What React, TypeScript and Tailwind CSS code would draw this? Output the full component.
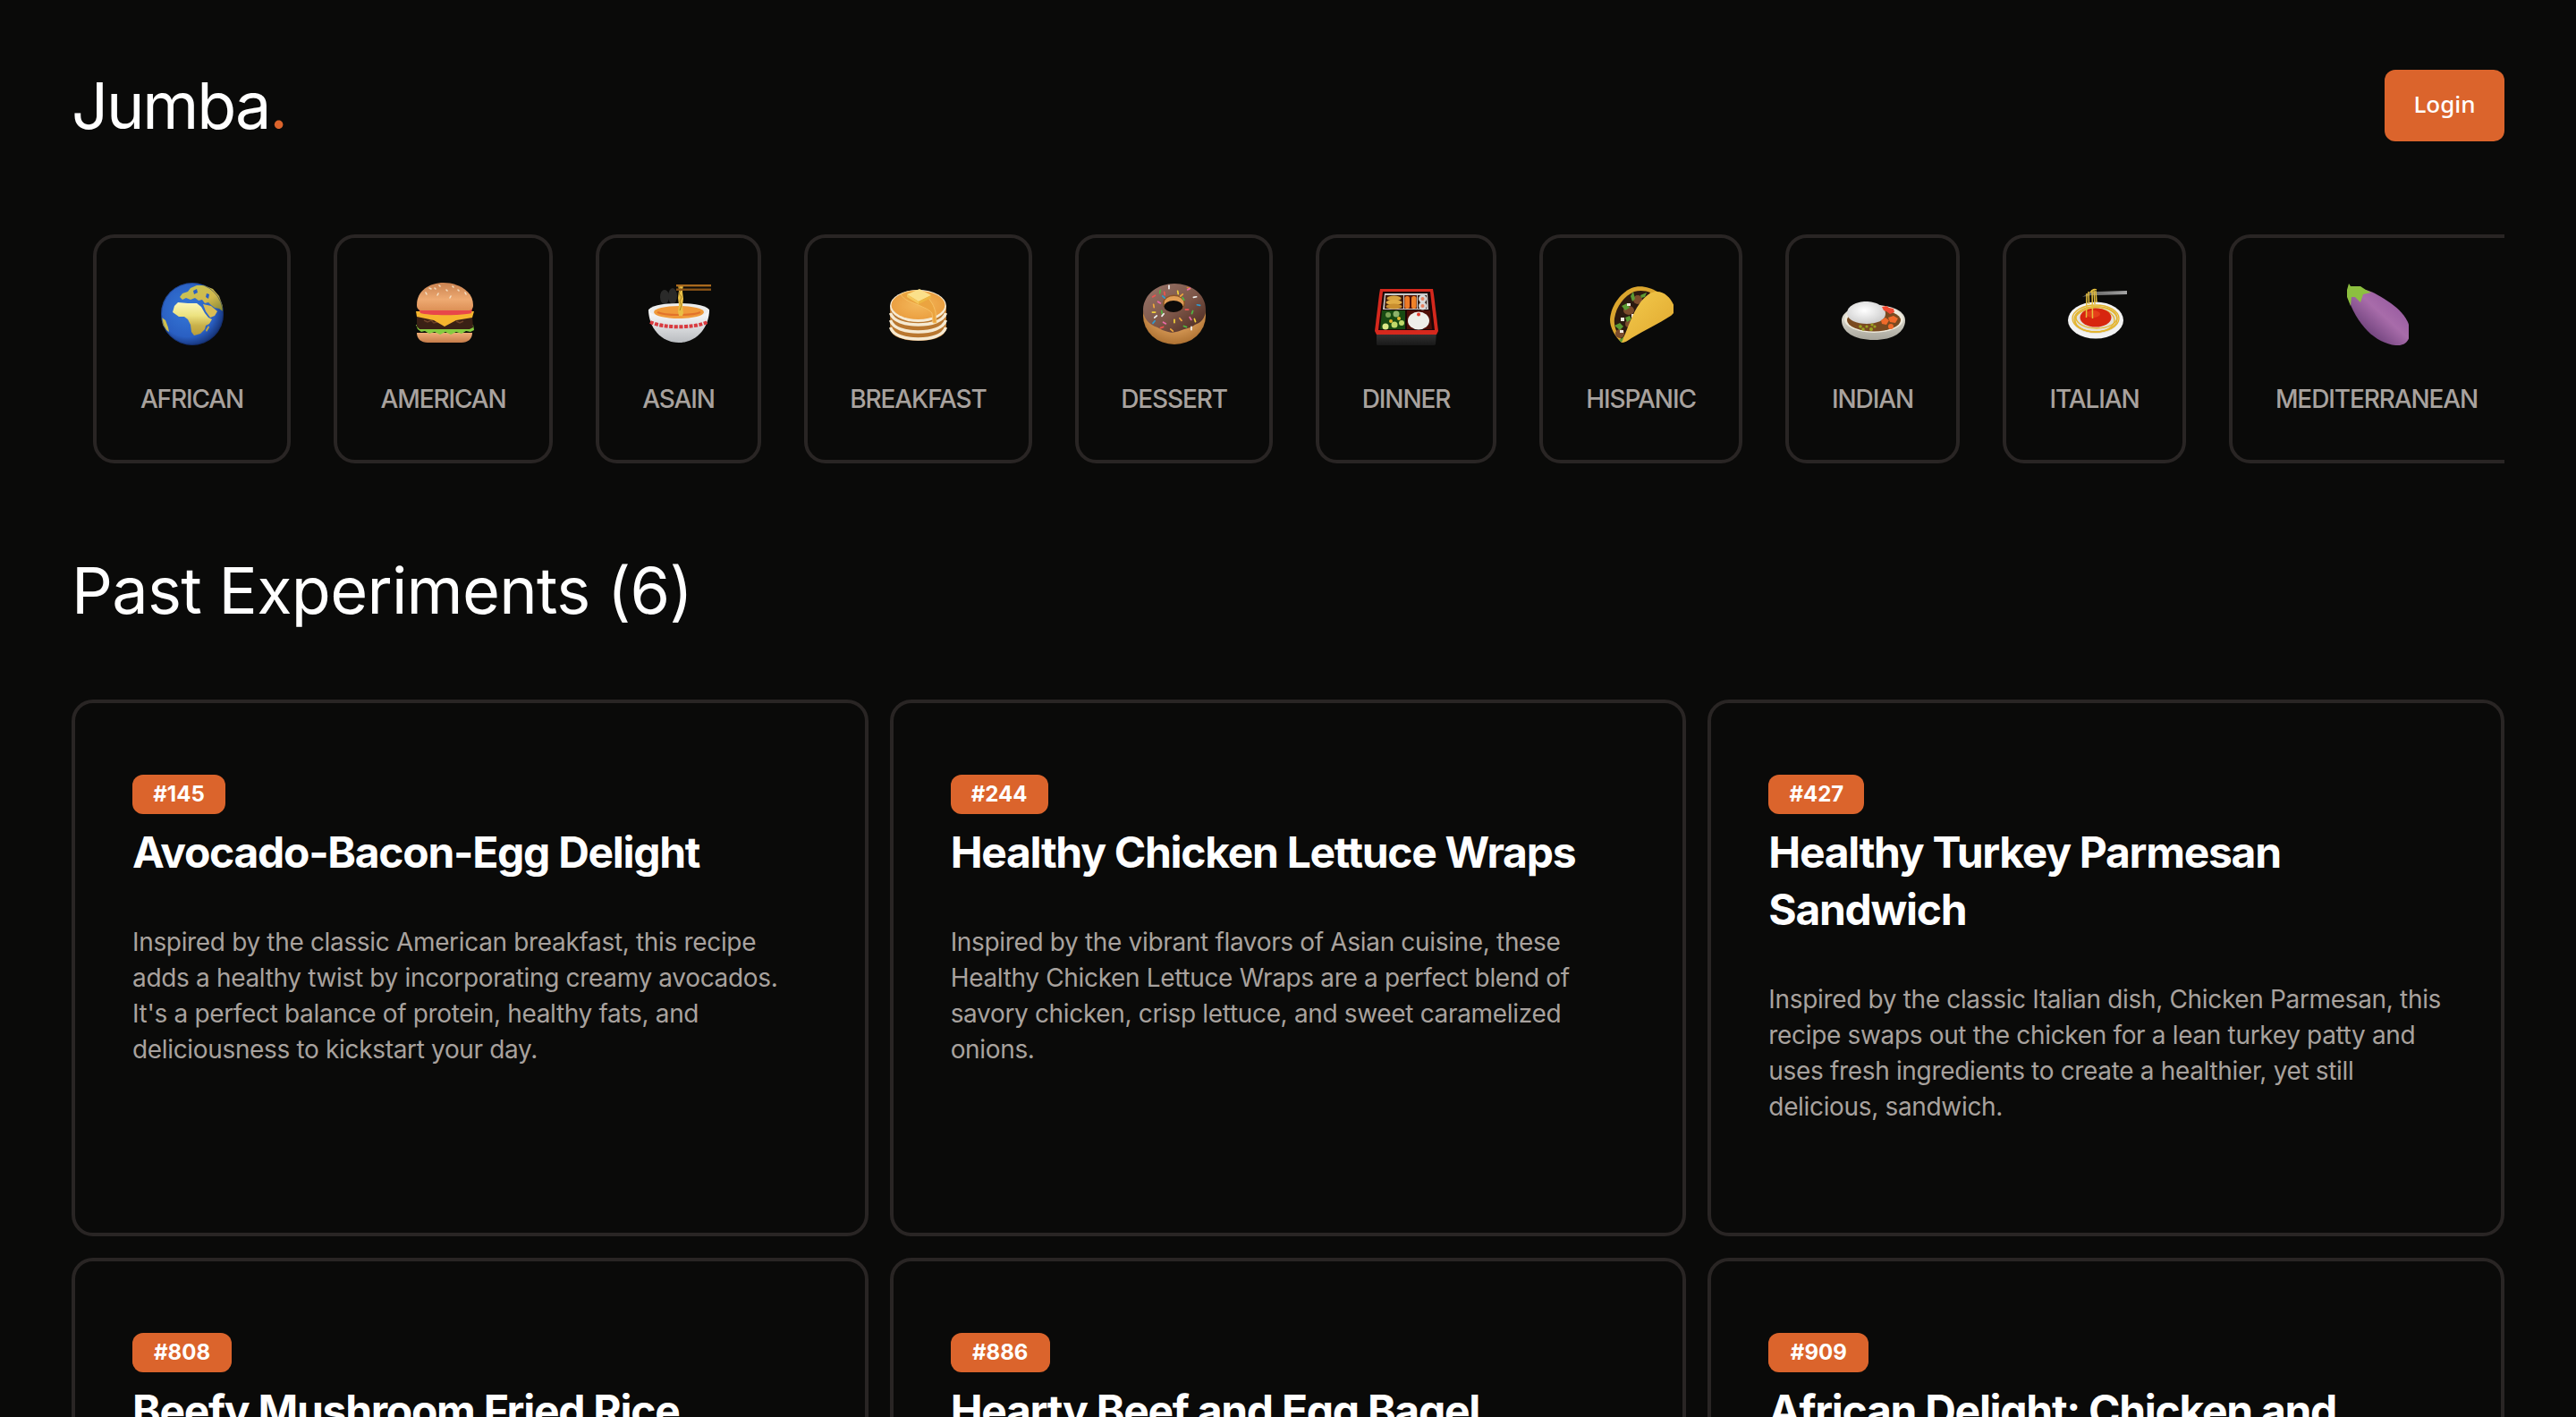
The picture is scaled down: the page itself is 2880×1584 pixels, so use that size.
/* Jumba landing page: header, cuisine strip and past experiments */
import type { ReactNode } from "react";

function EmojiBox({ children }: { children: ReactNode }) {
  return (
    <svg viewBox="0 0 72 72" className="h-[72px] w-[72px] shrink-0">
      {children}
    </svg>
  );
}

function Globe() {
  return (
    <EmojiBox>
      <defs>
        <radialGradient id="gSea" cx="42%" cy="42%" r="62%">
          <stop offset="0%" stopColor="#3578d8" />
          <stop offset="72%" stopColor="#2a5fc2" />
          <stop offset="100%" stopColor="#142f70" />
        </radialGradient>
        <linearGradient id="gAfrica" x1="0" y1="0" x2="0" y2="1">
          <stop offset="0%" stopColor="#fbf7bb" />
          <stop offset="40%" stopColor="#ece27f" />
          <stop offset="70%" stopColor="#c9b14a" />
          <stop offset="100%" stopColor="#b89c3a" />
        </linearGradient>
        <linearGradient id="gAsia" x1="0" y1="0" x2="1" y2="1">
          <stop offset="0%" stopColor="#c3c657" />
          <stop offset="60%" stopColor="#d3b94c" />
          <stop offset="100%" stopColor="#7f8434" />
        </linearGradient>
      </defs>
      <g transform="translate(1 2)">
        <circle cx="35" cy="35" r="35" fill="url(#gSea)" />
        <path d="M13 33L15 26L19 22L30 23L40 23L45 27L49 34L53 39L57 41L54 46L50 48L49 52L44 57L37 59L34 55L33 47L30 41L26 38L20 38Z" fill="url(#gAfrica)" />
        <path d="M21 16L24 12L30 10L33 6L40 3L48 3L58 7L65 15L69 26L69 32L65 29L60 28L56 25L53 22L49 23L46 19L42 20L38 17L33 19L28 17L24 19Z" fill="url(#gAsia)" />
        <path d="M47 24L56 26L63 32L60 37L55 39L50 32Z" fill="#d9bd55" />
        <path d="M1 39L5 42L8 50L9 55L6 53L2 47Z" fill="#cfc04f" />
        <path d="M50 53L53 48L54 50L51 55Z" fill="#c2aa45" />
        <path d="M36 9l4-2 1 4-4 2zM51 12l3 1-1 5-3-2z" fill="#2a5fc2" />
        <circle cx="35" cy="35" r="34.500" fill="none" stroke="#10265f" strokeOpacity=".5" strokeWidth="1" />
      </g>
    </EmojiBox>
  );
}

function Burger() {
  return (
    <EmojiBox>
      <defs>
        <linearGradient id="bBun" x1="0" y1="0" x2="0" y2="1">
          <stop offset="0%" stopColor="#c98250" />
          <stop offset="60%" stopColor="#eeaa72" />
          <stop offset="100%" stopColor="#dd9056" />
        </linearGradient>
        <linearGradient id="bLow" x1="0" y1="0" x2="0" y2="1">
          <stop offset="0%" stopColor="#f0ae78" />
          <stop offset="100%" stopColor="#c57c4a" />
        </linearGradient>
      </defs>
      <path d="M6 58h62c0 7-5 11-12 11H18C11 69 6 65 6 58z" fill="url(#bLow)" />
      <path d="M5 49h64l1 6-4 2-5-1-5 3-6-2-6 3-6-3-6 3-6-3-6 2-5-3-4 1-4-3z" fill="#86cb3f" />
      <path d="M6 40h62l1 12-4 2H9l-3-3z" fill="#3a2015" />
      <path d="M14 44l4 2 4-2 3 3 4-1M50 45l4 2 4-2" stroke="#6c4128" strokeWidth="1.500" fill="none" />
      <path d="M5 34h65l-2 7-18 3-13 7-12-7-19-4z" fill="#f6b52e" />
      <path d="M8 31h60l-1 5c-10 3-48 3-57 0z" fill="#e8474a" />
      <path d="M6 27C6 11 20 2 36 2s33 9 33 25c0 4-2 6-6 6H12c-4 0-6-2-6-6z" fill="url(#bBun)" />
      <g stroke="#f2dcc0" strokeWidth="1.600" strokeLinecap="round">
        <path d="M31 5l1 1M46 6l1 1M20 8l2 1M39 10l1 1M52 10l1 1M16 13l1 2M30 14l-1 2M60 13l1 2M44 17l-1 2M26 8l1 1" />
      </g>
    </EmojiBox>
  );
}

function Ramen() {
  return (
    <EmojiBox>
      <defs>
        <linearGradient id="rBowl" x1="0" y1="0" x2="0" y2="1">
          <stop offset="0%" stopColor="#ffffff" />
          <stop offset="100%" stopColor="#b9bcc0" />
        </linearGradient>
      </defs>
      <g fill="#ffffff" opacity=".13">
        <ellipse cx="20" cy="18" rx="5" ry="8" />
        <ellipse cx="29" cy="17" rx="5" ry="9" />
      </g>
      <path d="M2 32c0 20 14 37 34 37s34-17 34-37z" fill="url(#rBowl)" />
      <ellipse cx="36" cy="33" rx="34" ry="8" fill="#eceded" />
      <ellipse cx="36" cy="35" rx="28" ry="7" fill="#f09a3a" />
      <path d="M12 35c8 4 40 4 48 0" stroke="#e2722a" strokeWidth="2" fill="none" />
      <path d="M4 46c14 7 50 7 64 0" stroke="#d93a3f" strokeWidth="4" strokeDasharray="4 1.500" fill="none" />
      <path d="M35 4l6 0-1 8 1 8-1 8 1 8-1 3h-4l-1-5 1-7-1-8 1-8z" fill="#e9bf45" />
      <path d="M36 6l2 4-2 4 3 4-2 5 2 4-2 6" stroke="#a47b22" strokeWidth=".9" fill="none" />
      <rect x="33" y="4" width="39" height="2.400" fill="#a9691e" />
      <rect x="33" y="8.500" width="39" height="2.400" fill="#8a5418" />
    </EmojiBox>
  );
}

function Pancakes() {
  return (
    <EmojiBox>
      <defs>
        <radialGradient id="pTop" cx="50%" cy="50%" r="60%">
          <stop offset="0%" stopColor="#f4b75a" />
          <stop offset="100%" stopColor="#e99b3c" />
        </radialGradient>
      </defs>
      <path d="M4 28v24c0 10 14 15 31.500 15S67 62 67 52V28z" fill="#b9772f" />
      <g fill="none" stroke="#f6ead2" strokeWidth="3.400">
        <path d="M4.500 36c3 9 16 13 31 13s28-4 31-13" />
        <path d="M4.500 44c3 9 16 13 31 13s28-4 31-13" />
        <path d="M4.500 52c3 9 16 13 31 13s28-4 31-13" />
      </g>
      <ellipse cx="35.500" cy="28" rx="31.500" ry="18" fill="#f6ead2" />
      <ellipse cx="35.500" cy="27" rx="30" ry="16" fill="url(#pTop)" />
      <path d="M16 15c6-3 14-5 22-4 4 4 10 8 13 14 2 3 3 7 4 10l1 12-4 0-1-11c-3-4-9-6-15-9-8-3-17-6-20-12z" fill="#eba440" stroke="#f8c76b" strokeWidth=".8" />
      <path d="M23 15l14-6 13 7-14 7z" fill="#fbe08a" />
      <path d="M23 15l13 8v3l-13-8z" fill="#f5c75a" />
      <path d="M36 23l14-7v3l-14 7z" fill="#edb642" />
    </EmojiBox>
  );
}

function Donut() {
  const sprinkles: [number, number, number, string][] = [
    [30, 7, 90, "#f1f1f1"], [25, 14, 80, "#ef5350"], [13, 17, -30, "#ef5350"], [13, 28, 80, "#f2a93b"],
    [19, 24, 30, "#ec6aa7"], [13, 35, 0, "#f2d13b"], [22, 35, 80, "#52b743"], [40, 13, 80, "#f2d13b"],
    [52, 8, 20, "#d6892f"], [52, 9, -30, "#ec6aa7"], [20, 12, 100, "#52b743"], [24, 18, 40, "#2f9bd1"],
    [59, 18, -10, "#f1f1f1"], [46, 20, 60, "#52b743"], [44, 16, -40, "#f2a93b"], [63, 27, 10, "#2f9bd1"],
    [50, 32, 0, "#ef5350"], [56, 35, -70, "#52b743"], [59, 44, 70, "#f2d13b"], [54, 42, 60, "#ec6aa7"],
    [15, 40, -40, "#f1f1f1"], [23, 38, -50, "#f1f1f1"], [13, 46, -50, "#2f9bd1"], [25, 47, 30, "#ec6aa7"],
    [36, 45, 90, "#f2d13b"], [43, 43, 50, "#f2a93b"], [48, 51, 20, "#52b743"], [55, 53, 90, "#f1f1f1"],
    [22, 52, -20, "#ef5350"], [33, 55, 40, "#f2a93b"],
  ];
  return (
    <EmojiBox>
      <defs>
        <radialGradient id="dDough" cx="50%" cy="35%" r="70%">
          <stop offset="60%" stopColor="#d09350" />
          <stop offset="100%" stopColor="#a66a2c" />
        </radialGradient>
        <linearGradient id="dIce" x1="0" y1="0" x2="1" y2="1">
          <stop offset="0%" stopColor="#9a766b" />
          <stop offset="55%" stopColor="#7c5547" />
          <stop offset="100%" stopColor="#43231a" />
        </linearGradient>
      </defs>
      <ellipse cx="36" cy="39" rx="35" ry="32" fill="url(#dDough)" />
      <path d="M1 32C2 14 18 3 36 3s35 11 35 29c0 10-6 15-12 17-4 3-8 4-12 5-6 2-12 5-18 3-5-1-8-3-12-5C8 49 1 42 1 32z" fill="url(#dIce)" />
      <ellipse cx="35.500" cy="25" rx="12.500" ry="9.500" fill="#8a5426" />
      <ellipse cx="35.500" cy="25" rx="11" ry="8" fill="#e09d55" />
      <ellipse cx="35" cy="28.500" rx="10.500" ry="6.500" fill="#0c0a09" />
      {sprinkles.map(([x, y, r, c], i) => (
        <rect key={i} x={x - 2.500} y={y - 0.800} width="5" height="1.700" rx=".8" fill={c} transform={`rotate(${r} ${x} ${y})`} />
      ))}
    </EmojiBox>
  );
}

function Bento() {
  return (
    <EmojiBox>
      <defs>
        <linearGradient id="beBase" x1="0" y1="0" x2="0" y2="1">
          <stop offset="0%" stopColor="#3a3a3a" />
          <stop offset="100%" stopColor="#161616" />
        </linearGradient>
      </defs>
      <path d="M3 56h67l-1 15-3 2-12-1H16l-11 1-2-2z" fill="url(#beBase)" />
      <path d="M7 9h59l1 6 5 41-2 4H3l-2-4 5-41z" fill="#d5281d" />
      <path d="M10 12h53l5 43H5z" fill="#1c0606" />
      <path d="M12 14h48l1 18H10z" fill="#c9c9c9" />
      <path d="M13 16h20v15H12z" fill="#3d1a0b" />
      <path d="M34 16h14v15H34z" fill="#521206" />
      <path d="M49 16h10v15H49z" fill="#2a1a12" />
      <ellipse cx="22.500" cy="19.500" rx="8" ry="3" fill="#d8a23e" />
      <ellipse cx="22.500" cy="24" rx="9" ry="3" fill="#e0ac45" />
      <ellipse cx="22.500" cy="28.500" rx="9" ry="3" fill="#c98f2f" />
      <rect x="34.500" y="17" width="5.500" height="14" rx="2.500" fill="#ee7a26" />
      <rect x="42" y="17" width="5.500" height="14" rx="2.500" fill="#ef8329" />
      <circle cx="54.500" cy="20" r="4.500" fill="#d8d8d8" />
      <circle cx="54.500" cy="20" r="2" fill="#e8815f" />
      <circle cx="54.500" cy="28" r="4.500" fill="#d8d8d8" />
      <circle cx="54.500" cy="28" r="2" fill="#e8815f" />
      <path d="M9 33h26v21H7z" fill="#174a12" />
      <path d="M37 33h26l2 21H37z" fill="#4e0e08" />
      <g fill="#c0d96a">
        <circle cx="16" cy="38" r="3" fill="#7ca255" />
        <circle cx="25" cy="37" r="3.500" fill="#8db26a" />
        <circle cx="13" cy="51" r="3.500" fill="#dbe887" />
        <circle cx="23" cy="49" r="3.500" />
        <circle cx="31" cy="47" r="3" />
        <circle cx="19" cy="45" r="2" fill="#e6b62e" />
        <circle cx="28" cy="42" r="2" fill="#e6b62e" />
      </g>
      <ellipse cx="50" cy="44.500" rx="12" ry="10" fill="#eeeeea" />
      <circle cx="50" cy="37.500" r="2" fill="#e83a2c" />
    </EmojiBox>
  );
}

function Taco() {
  return (
    <EmojiBox>
      <defs>
        <linearGradient id="tShell" x1="0" y1="0" x2="1" y2="1">
          <stop offset="0%" stopColor="#f4cc4e" />
          <stop offset="100%" stopColor="#dfa62d" />
        </linearGradient>
      </defs>
      <path d="M14 69C6 62 1 52 1 43C2 28 12 14 25 8C34 4 46 7 54 12L40 40L20 66Z" fill="#dba62e" />
      <path d="M14 66C8 58 5 50 6 42C8 28 17 17 28 12C34 10 42 11 46 13L25 50Z" fill="#2c1a10" />
      <g fill="#7b4c2c">
        <ellipse cx="32" cy="21" rx="5" ry="5" />
        <ellipse cx="22" cy="33" rx="6" ry="5" />
        <ellipse cx="12" cy="59" rx="5" ry="5" />
        <ellipse cx="22" cy="48" rx="4" ry="4" />
      </g>
      <g fill="#5c9a33">
        <path d="M14 28l6-3 3 5-5 3zM6 50l6-3 4 4-4 4zM24 17l3-5 2 8-3 3zM35 16l7-3-2 5-4 1zM18 41l5-2 2 4-5 3zM11 66l5-3 1 3-3 3z" />
      </g>
      <g fill="#efe9dc">
        <rect x="13" y="41" width="4" height="4" />
        <rect x="12" y="55" width="4" height="3" />
        <rect x="20" y="25" width="4" height="3" />
        <rect x="25" y="37" width="3" height="4" />
      </g>
      <path d="M14 69C20 55 24 42 31 30C37 20 44 13 52 12C62 11 70 20 73 29C74 34 72 37 69 39C55 48 40 55 25 64C21 67 17 69 14 69Z" fill="url(#tShell)" />
    </EmojiBox>
  );
}

function Curry() {
  return (
    <EmojiBox>
      <defs>
        <linearGradient id="cBowl" x1="0" y1="0" x2="0" y2="1">
          <stop offset="0%" stopColor="#f3f0e6" />
          <stop offset="100%" stopColor="#a8a69c" />
        </linearGradient>
        <radialGradient id="cRice" cx="45%" cy="40%" r="60%">
          <stop offset="0%" stopColor="#ffffff" />
          <stop offset="100%" stopColor="#cfcfcf" />
        </radialGradient>
      </defs>
      <path d="M1 44c0 13 14 22 36 22s35-9 35-22c0-10-14-17-35-17S1 34 1 44z" fill="url(#cBowl)" />
      <ellipse cx="37" cy="43" rx="33" ry="15" fill="#efebdd" />
      <ellipse cx="37" cy="44" rx="30" ry="12.500" fill="#7a4a20" />
      <path d="M7 36C7 28 18 23 28 23c11 0 22 5 22 14 0 7-10 11-21 11C18 48 7 44 7 36z" fill="url(#cRice)" />
      <g fill="#f06a2a">
        <path d="M45 44l5-3 4 3-3 5-5-1z" />
        <path d="M53 41l6-2 5 3-3 5-6-1z" />
        <circle cx="56" cy="51" r="3" />
      </g>
      <path d="M46 29l5-1 3 2 5 1 1 4-5 2-4-3-3-1z" fill="#ef4a32" />
      <g fill="#9aa420">
        <circle cx="22" cy="51" r="1.800" />
        <circle cx="25" cy="54" r="1.800" />
        <circle cx="29" cy="51" r="1.600" />
        <circle cx="34" cy="54" r="2" />
        <circle cx="35" cy="49" r="1.600" />
        <circle cx="38" cy="51" r="1.600" />
      </g>
    </EmojiBox>
  );
}

function Spaghetti() {
  return (
    <EmojiBox>
      <defs>
        <linearGradient id="sFork" x1="0" y1="0" x2="1" y2="0">
          <stop offset="0%" stopColor="#555" />
          <stop offset="100%" stopColor="#a5a5a5" />
        </linearGradient>
      </defs>
      <ellipse cx="37" cy="44" rx="31" ry="20.500" fill="#f2f2f2" />
      <ellipse cx="37" cy="43" rx="26" ry="16" fill="#e5e2d8" />
      <g fill="none" stroke="#e4b52f" strokeWidth="1.300">
        <ellipse cx="37" cy="42" rx="26" ry="15" />
        <ellipse cx="37" cy="43" rx="24" ry="14" />
        <ellipse cx="36" cy="44" rx="22" ry="13" />
        <ellipse cx="38" cy="41" rx="23" ry="12" />
      </g>
      <ellipse cx="37" cy="41" rx="17.500" ry="10.500" fill="#d7260f" />
      <ellipse cx="34" cy="37" rx="8" ry="4" fill="#ec4a20" opacity=".7" />
      <path d="M22 18l9-6 8 0 33-1v4l-33 1-7 0z" fill="url(#sFork)" />
      <g fill="none" stroke="#e6bf3d" strokeWidth="1.500">
        <path d="M27 14l-.5 27" />
        <path d="M29 12l.5 14" />
        <path d="M33 10l.5 32" />
        <path d="M35 10l1 16" />
        <path d="M37 11l1 13" />
        <path d="M31 13c2-3 5-4 7-3" />
      </g>
    </EmojiBox>
  );
}

function Eggplant() {
  return (
    <EmojiBox>
      <defs>
        <linearGradient id="eBody" x1="1" y1="0" x2="0" y2="1">
          <stop offset="0%" stopColor="#8a4d98" />
          <stop offset="45%" stopColor="#a86caa" />
          <stop offset="100%" stopColor="#3f1f55" />
        </linearGradient>
      </defs>
      <path d="M4 18C8 32 16 46 26 56C36 66 50 73 62 72C71 71 75 62 73 52C71 42 62 32 52 25C42 18 32 12 24 10C14 8 4 10 4 18Z" fill="url(#eBody)" />
      <path d="M5 3L7 6L18 6L24 10L30 13L21 15L18 24L12 18L8 18L7 28L3 18L3 10Z" fill="#8cbf3f" />
    </EmojiBox>
  );
}

const CUISINES = [
  { label: "AFRICAN", width: "w-[221px]", icon: Globe },
  { label: "AMERICAN", width: "w-[245px]", icon: Burger },
  { label: "ASAIN", width: "w-[185px]", icon: Ramen },
  { label: "BREAKFAST", width: "w-[255px]", icon: Pancakes },
  { label: "DESSERT", width: "w-[221px]", icon: Donut },
  { label: "DINNER", width: "w-[202px]", icon: Bento },
  { label: "HISPANIC", width: "w-[227px]", icon: Taco },
  { label: "INDIAN", width: "w-[195px]", icon: Curry },
  { label: "ITALIAN", width: "w-[205px]", icon: Spaghetti },
  { label: "MEDITERRANEAN", width: "w-[330px]", icon: Eggplant },
];

const EXPERIMENTS = [
  {
    id: "#145",
    badge: "w-[104px]",
    title: "Avocado-Bacon-Egg Delight",
    lines: [
      "Inspired by the classic American breakfast, this recipe",
      "adds a healthy twist by incorporating creamy avocados.",
      "It's a perfect balance of protein, healthy fats, and",
      "deliciousness to kickstart your day.",
    ],
  },
  {
    id: "#244",
    badge: "w-[109px]",
    title: "Healthy Chicken Lettuce Wraps",
    lines: [
      "Inspired by the vibrant flavors of Asian cuisine, these",
      "Healthy Chicken Lettuce Wraps are a perfect blend of",
      "savory chicken, crisp lettuce, and sweet caramelized",
      "onions.",
    ],
  },
  {
    id: "#427",
    badge: "w-[107px]",
    title: "Healthy Turkey Parmesan Sandwich",
    lines: [
      "Inspired by the classic Italian dish, Chicken Parmesan, this",
      "recipe swaps out the chicken for a lean turkey patty and",
      "uses fresh ingredients to create a healthier, yet still",
      "delicious, sandwich.",
    ],
  },
  { id: "#808", badge: "w-[111px]", title: "Beefy Mushroom Fried Rice", lines: [] },
  { id: "#886", badge: "w-[111px]", title: "Hearty Beef and Egg Bagel", lines: [] },
  { id: "#909", badge: "w-[112px]", title: "African Delight: Chicken and", lines: [] },
];

export default function App() {
  return (
    <div className="h-screen overflow-hidden bg-[#0a0a09] px-20 font-['Inter',sans-serif] text-white">
      {/* Header */}
      <header className="flex h-[238px] items-start justify-between pt-[78px]">
        <h1 className="text-[72px] leading-[80px] font-normal tracking-[-0.03em]">
          Jumba<span className="text-[#db642c]">.</span>
        </h1>
        <button className="h-20 w-[134px] rounded-xl bg-[#db642c] pb-1 font-['Noto_Sans',sans-serif] text-[26px] font-medium">
          Login
        </button>
      </header>

      {/* Cuisine strip */}
      <div className="mt-6 flex gap-12 overflow-hidden pl-6">
        {CUISINES.map((c) => (
          <div
            key={c.label}
            className={`${c.width} flex h-64 shrink-0 flex-col items-center rounded-3xl border-4 border-[#292524] py-12`}
          >
            <c.icon />
            <span className="mt-10 text-[28px] leading-10 font-medium tracking-[-0.04em] text-[#a8a29e]">{c.label}</span>
          </div>
        ))}
      </div>

      <h2 className="mt-[102px] text-[72px] leading-[80px] font-normal tracking-[-0.01em]">Past Experiments (6)</h2>

      {/* Experiment cards */}
      <div className="mt-[82px] grid grid-cols-3 gap-6">
        {EXPERIMENTS.map((e) => (
          <div key={e.id} className="h-[600px] rounded-3xl border-4 border-[#292524] px-16 pt-20">
            <span className={`${e.badge} block h-11 rounded-xl bg-[#db642c] text-center text-2xl leading-11 font-bold`}>
              {e.id}
            </span>
            <h3 className="mt-[11px] text-[48px] leading-16 font-bold tracking-[-0.027em]">{e.title}</h3>
            <p className="mt-12 text-[28px] leading-10 tracking-[-0.012em] whitespace-nowrap text-[#a8a29e]">
              {e.lines.map((line) => (
                <span key={line} className="block">
                  {line}
                </span>
              ))}
            </p>
          </div>
        ))}
      </div>
    </div>
  );
}
